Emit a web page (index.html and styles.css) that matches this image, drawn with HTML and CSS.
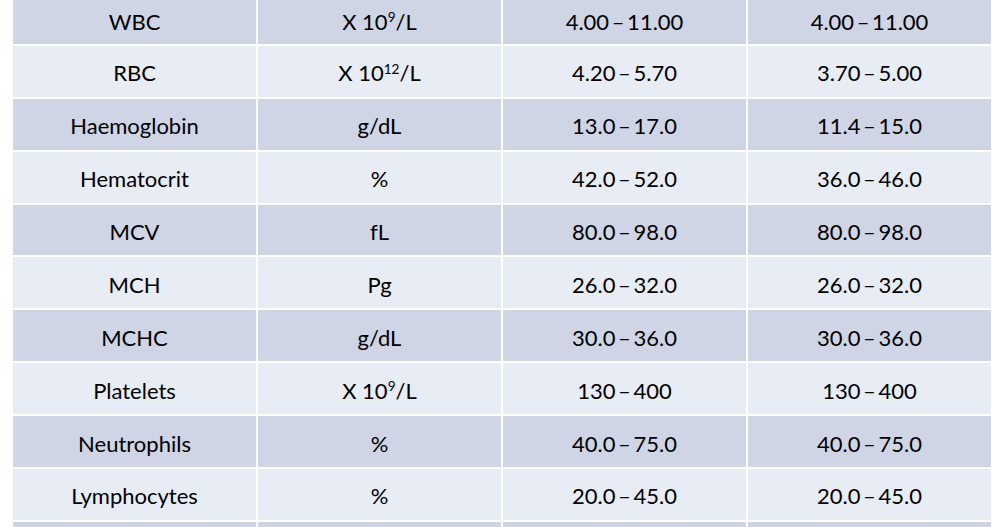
FILE: index.html
```html
<!DOCTYPE html>
<html>
<head>
<meta charset="utf-8">
<link rel="stylesheet" href="styles.css">
</head>
<body>
<div class="table">
  <div class="row first"><div class="cell">WBC</div><div class="cell">X 10<sup>9</sup>/L</div><div class="cell rng">4.00 – 11.00</div><div class="cell rng">4.00 – 11.00</div></div>
  <div class="row"><div class="cell">RBC</div><div class="cell">X 10<sup>12</sup>/L</div><div class="cell rng">4.20 – 5.70</div><div class="cell rng">3.70 – 5.00</div></div>
  <div class="row"><div class="cell">Haemoglobin</div><div class="cell">g/dL</div><div class="cell rng">13.0 – 17.0</div><div class="cell rng">11.4 – 15.0</div></div>
  <div class="row"><div class="cell">Hematocrit</div><div class="cell">%</div><div class="cell rng">42.0 – 52.0</div><div class="cell rng">36.0 – 46.0</div></div>
  <div class="row"><div class="cell">MCV</div><div class="cell">fL</div><div class="cell rng">80.0 – 98.0</div><div class="cell rng">80.0 – 98.0</div></div>
  <div class="row"><div class="cell">MCH</div><div class="cell">Pg</div><div class="cell rng">26.0 – 32.0</div><div class="cell rng">26.0 – 32.0</div></div>
  <div class="row"><div class="cell">MCHC</div><div class="cell">g/dL</div><div class="cell rng">30.0 – 36.0</div><div class="cell rng">30.0 – 36.0</div></div>
  <div class="row"><div class="cell">Platelets</div><div class="cell">X 10<sup>9</sup>/L</div><div class="cell rng">130 – 400</div><div class="cell rng">130 – 400</div></div>
  <div class="row"><div class="cell">Neutrophils</div><div class="cell">%</div><div class="cell rng">40.0 – 75.0</div><div class="cell rng">40.0 – 75.0</div></div>
  <div class="row"><div class="cell">Lymphocytes</div><div class="cell">%</div><div class="cell rng">20.0 – 45.0</div><div class="cell rng">20.0 – 45.0</div></div>
  <div class="row"><div class="cell"></div><div class="cell"></div><div class="cell"></div><div class="cell"></div></div>
</div>
</body>
</html>
```
FILE: styles.css
```css
html, body {
  margin: 0;
  padding: 0;
  background: #ffffff;
  overflow: hidden;
}
body {
  font-family: Lato, "Open Sans", "Liberation Sans", sans-serif;
  font-size: 22px;
  color: #000000;
}
.table {
  display: flex;
  flex-direction: column;
  gap: 2px;
  margin: -7px 0 0 13px;
  width: 978px;
}
.row {
  display: grid;
  grid-template-columns: repeat(4, 1fr);
  gap: 2px;
  height: 50.9px;
}
.cell {
  display: flex;
  align-items: center;
  justify-content: center;
  padding-top: 3px;
  box-sizing: border-box;
  background: #e8ecf4;
  white-space: nowrap;
}
.rng {
  word-spacing: -3px;
}
.row:nth-child(odd) .cell {
  background: #cfd5e5;
}
.row.first .cell {
  padding-top: 6px;
}
sup {
  font-size: 0.62em;
  vertical-align: top;
  position: relative;
  top: -0.25em;
  line-height: 1;
}
```
